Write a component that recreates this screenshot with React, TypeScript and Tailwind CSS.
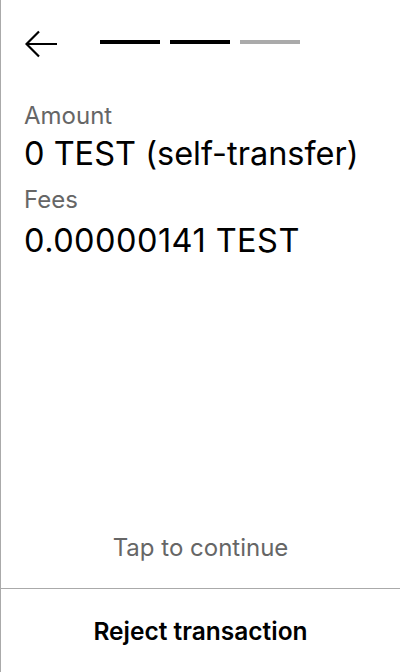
import React from 'react';

const App: React.FC = () => {
  return (
    <div
      className="h-[672px] w-[400px] flex flex-col bg-white border-l border-[#aaaaaa] text-black"
      style={{ fontFamily: 'Inter, "Noto Sans", sans-serif' }}
    >
      <div className="flex items-center h-[86px] pl-[24px]">
        <svg width="33" height="28" viewBox="0 0 33 28" fill="none" className="mt-[1px]">
          <path d="M32 14H2M14 1.5L1.5 14L14 26.5" stroke="black" strokeWidth="2.2" />
        </svg>
        <div className="flex gap-[10px] ml-[42px] -mt-[2px]">
          <div className="w-[60px] h-[4px] bg-black" />
          <div className="w-[60px] h-[4px] bg-black" />
          <div className="w-[60px] h-[4px] bg-[#aaaaaa]" />
        </div>
      </div>

      <div className="flex-1 flex flex-col px-[23px] pt-[15px]">
        <div className="text-[24px] leading-[30px] text-[#666666]">Amount</div>
        <div className="text-[32.5px] leading-[38px] mt-[4px]">0 TEST (self-transfer)</div>
        <div className="text-[24px] leading-[30px] text-[#666666] mt-[12px]">Fees</div>
        <div className="text-[32.5px] leading-[38px] mt-[7px] tracking-[0.014em]">0.00000141 TEST</div>
      </div>

      <div className="text-center text-[24px] leading-[30px] text-[#666666] pb-[25px]">Tap to continue</div>

      <div className="border-t border-[#aaaaaa] h-[84px] flex items-center justify-center">
        <span className="text-[24.5px] leading-[30px] font-semibold mt-[1px]">Reject transaction</span>
      </div>
    </div>
  );
};

export default App;
